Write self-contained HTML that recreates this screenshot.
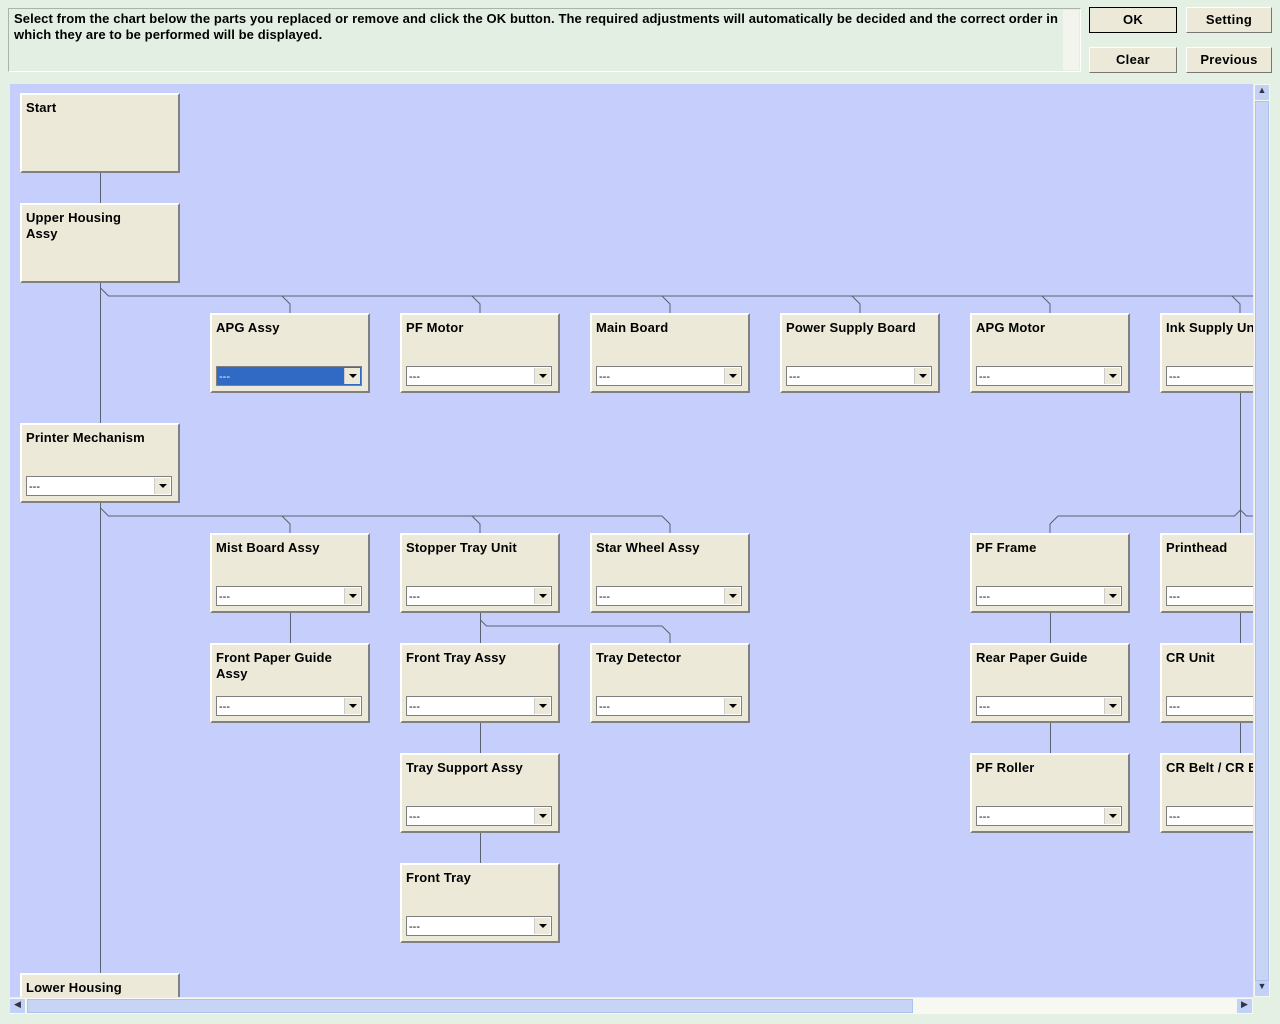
<!DOCTYPE html>
<html><head><style>
body{margin:0;width:1280px;height:1024px;background:#e4f0e3;font-family:"Liberation Sans",Arial,sans-serif;position:relative;overflow:hidden}
.ta{position:absolute;left:8px;top:8px;width:1073px;height:64px;border:1px solid #a8b4a8;border-right-color:#fff;border-bottom-color:#fff;background:#e3efe2;box-sizing:border-box}
.ta p{margin:0;position:absolute;left:5px;top:2px;width:1044px;font-size:13px;font-weight:bold;line-height:16px;color:#000;text-align:justify;letter-spacing:0.1px}
.btn{position:absolute;height:26px;background:#ece9d8;border:1px solid #fff;border-right-color:#777;border-bottom-color:#777;box-sizing:border-box;font-size:13px;font-weight:bold;text-align:center;line-height:23px;letter-spacing:0.3px}
.chart{position:absolute;left:10px;top:84px;width:1243px;height:913px;background:#c6cffb;overflow:hidden}
.box{position:absolute;width:160px;height:80px;background:#ece9d8;border:2px solid #fff;border-right-color:#808080;border-bottom-color:#808080;box-sizing:border-box}
.box b{position:absolute;left:4px;top:5px;font-size:13px;line-height:16px;width:140px;letter-spacing:0.15px}
.sel{position:absolute;left:4px;top:51px;width:146px;height:20px;background:#fff;border:1px solid #7f7f7f;box-sizing:border-box;font-size:11px;line-height:20px;padding-left:2px}
.sel i{position:absolute;right:1px;top:1px;width:15px;height:16px;background:#ece9d8;border-left:1px solid #ccc}
.sel i:after{content:"";position:absolute;left:4px;top:6px;border:4px solid transparent;border-top:4px solid #000;border-bottom:0}
.hl{background:#316ac5;color:#fff}
svg{position:absolute;left:0;top:0}
</style></head><body>
<div class="ta"><p>Select from the chart below the parts you replaced or remove and click the OK button. The required adjustments will automatically be decided and the correct order in which they are to be performed will be displayed.</p>
<div style="position:absolute;right:1px;top:1px;width:16px;height:60px;background:#f4f4ee"></div></div>
<div class="btn" style="left:1089px;top:7px;width:88px;border:1px solid #000">OK</div>
<div class="btn" style="left:1186px;top:7px;width:86px">Setting</div>
<div class="btn" style="left:1089px;top:47px;width:88px">Clear</div>
<div class="btn" style="left:1186px;top:47px;width:86px">Previous</div>
<div class="chart">
<svg width="1243" height="913" viewBox="10 84 1243 913"><g stroke="#5a6070" stroke-width="1" fill="none">
<path d="M100.5 172v31M100.5 282V973M100.5 288l8 8H1253M100.5 508l8 8H662l8 8v9"/>
<path d="M282 296l8 8v9M472 296l8 8v9M662 296l8 8v9M852 296l8 8v9M1042 296l8 8v9M1232 296l8 8v9M282 516l8 8v9M472 516l8 8v9"/>
<path d="M1240.5 392V643M1240.5 722v31M1240.5 510l-6 6H1058l-8 8v9M1240.5 510l6 6h10"/>
<path d="M290.5 612v31M480.5 612v8l6 6H662l8 8v9M480.5 620v23M480.5 722v31M480.5 832v31M1050.5 612v31M1050.5 722v31"/>
</g></svg>
<div class="box" style="left:10px;top:9px"><b>Start</b></div>
<div class="box" style="left:10px;top:119px"><b style="width:100px">Upper Housing Assy</b></div>
<div class="box" style="left:200px;top:229px"><b>APG Assy</b><div class="sel hl">---<i></i></div></div>
<div class="box" style="left:390px;top:229px"><b>PF Motor</b><div class="sel">---<i></i></div></div>
<div class="box" style="left:580px;top:229px"><b>Main Board</b><div class="sel">---<i></i></div></div>
<div class="box" style="left:770px;top:229px"><b style="width:150px">Power Supply Board</b><div class="sel">---<i></i></div></div>
<div class="box" style="left:960px;top:229px"><b>APG Motor</b><div class="sel">---<i></i></div></div>
<div class="box" style="left:1150px;top:229px"><b>Ink Supply Unit</b><div class="sel">---<i></i></div></div>
<div class="box" style="left:10px;top:339px"><b style="width:150px">Printer Mechanism</b><div class="sel">---<i></i></div></div>
<div class="box" style="left:200px;top:449px"><b>Mist Board Assy</b><div class="sel">---<i></i></div></div>
<div class="box" style="left:390px;top:449px"><b>Stopper Tray Unit</b><div class="sel">---<i></i></div></div>
<div class="box" style="left:580px;top:449px"><b>Star Wheel Assy</b><div class="sel">---<i></i></div></div>
<div class="box" style="left:960px;top:449px"><b>PF Frame</b><div class="sel">---<i></i></div></div>
<div class="box" style="left:1150px;top:449px"><b>Printhead</b><div class="sel">---<i></i></div></div>
<div class="box" style="left:200px;top:559px"><b style="width:125px">Front Paper Guide Assy</b><div class="sel">---<i></i></div></div>
<div class="box" style="left:390px;top:559px"><b>Front Tray Assy</b><div class="sel">---<i></i></div></div>
<div class="box" style="left:580px;top:559px"><b>Tray Detector</b><div class="sel">---<i></i></div></div>
<div class="box" style="left:960px;top:559px"><b>Rear Paper Guide</b><div class="sel">---<i></i></div></div>
<div class="box" style="left:1150px;top:559px"><b>CR Unit</b><div class="sel">---<i></i></div></div>
<div class="box" style="left:390px;top:669px"><b style="width:150px">Tray Support Assy</b><div class="sel">---<i></i></div></div>
<div class="box" style="left:960px;top:669px"><b>PF Roller</b><div class="sel">---<i></i></div></div>
<div class="box" style="left:1150px;top:669px"><b style="width:150px">CR Belt / CR Encoder</b><div class="sel">---<i></i></div></div>
<div class="box" style="left:390px;top:779px"><b>Front Tray</b><div class="sel">---<i></i></div></div>
<div class="box" style="left:10px;top:889px"><b>Lower Housing</b></div>
</div>
<div style="position:absolute;left:1254px;top:84px;width:16px;height:913px;background:#f6f6f0"></div>
<div style="position:absolute;left:1255px;top:101px;width:14px;height:880px;background:#c8d4f6;border:1px solid #b0c0ec;box-sizing:border-box"></div>
<div style="position:absolute;left:1255px;top:85px;width:14px;height:15px;background:#c2d2f6;font-size:9px;text-align:center;color:#334">&#9650;</div>
<div style="position:absolute;left:1255px;top:981px;width:14px;height:15px;background:#c2d2f6;font-size:9px;text-align:center;color:#334">&#9660;</div>
<div style="position:absolute;left:10px;top:998px;width:1243px;height:16px;background:#f8f8f2"></div>
<div style="position:absolute;left:10px;top:999px;width:15px;height:14px;background:#c2d2f6;font-size:9px;text-align:center;color:#334">&#9664;</div>
<div style="position:absolute;left:27px;top:999px;width:886px;height:14px;background:#c8d4f6;border:1px solid #b0c0ec;box-sizing:border-box"></div>
<div style="position:absolute;left:1237px;top:999px;width:15px;height:14px;background:#c2d2f6;font-size:9px;text-align:center;color:#334">&#9654;</div>
</body></html>
